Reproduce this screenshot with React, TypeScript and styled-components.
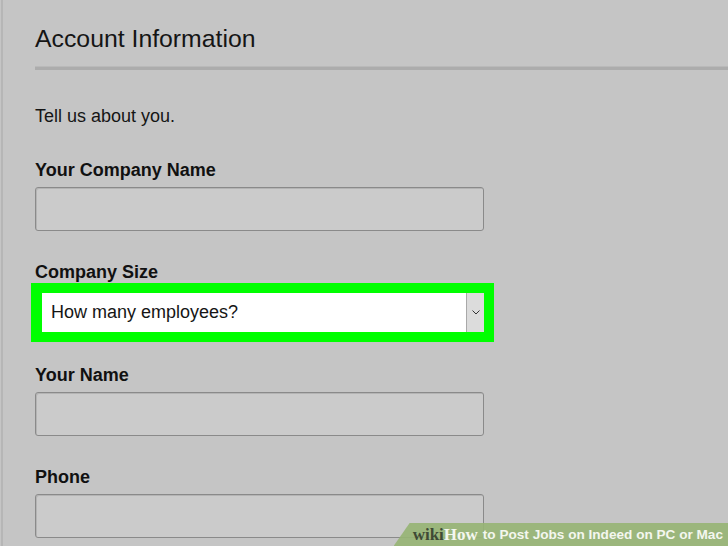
import React from 'react'
import styled, { createGlobalStyle } from 'styled-components'

const GlobalStyle = createGlobalStyle`
  html, body {
    margin: 0;
    padding: 0;
    background: #c5c5c5;
  }
  body {
    font-family: "Liberation Sans", Arial, sans-serif;
    color: #111111;
  }
`

const Page = styled.div`
  position: relative;
  width: 728px;
  height: 546px;
  overflow: hidden;
  background: #c5c5c5;
`

const Panel = styled.div`
  margin-left: 1px;
  height: 100%;
  border-left: 2px solid #b6b6b6;
  padding-left: 32px;
  padding-top: 24px;
  box-sizing: border-box;
`

const Title = styled.h1`
  margin: 0;
  font-size: 24.8px;
  line-height: 30px;
  font-weight: 400;
  color: #151515;
`

const Divider = styled.div`
  margin-top: 12px;
  height: 4px;
  background: #acacac;
  border-top: 1px solid #b9b9b9;
  box-sizing: border-box;
`

const Intro = styled.p`
  margin: 36px 0 0;
  font-size: 18px;
  line-height: 20px;
  color: #151515;
`

const Field = styled.div<{ $top: number }>`
  display: flex;
  flex-direction: column;
  align-items: flex-start;
  margin-top: ${p => p.$top}px;
`

const Label = styled.label<{ $gap: number }>`
  font-size: 18px;
  line-height: 20px;
  font-weight: 700;
  color: #111111;
  margin-bottom: ${p => p.$gap}px;
`

const TextInput = styled.div`
  width: 449px;
  height: 44px;
  box-sizing: border-box;
  border: 1px solid #8a8a8a;
  border-radius: 3px;
  background: #cbcbcb;
  box-shadow: inset 1px 1px 0 #b4b4b4;
`

const Highlight = styled.div`
  margin-left: -4px;
  border: 10px solid #00ff00;
  border-left-width: 11px;
  display: flex;
  width: 442px;
  height: 39px;
`

const SelectValue = styled.div`
  flex: 1;
  background: #ffffff;
  display: flex;
  align-items: center;
  padding-left: 9px;
  font-size: 18px;
  color: #151515;
`

const SelectButton = styled.div`
  width: 17px;
  background: #dcdcdc;
  border-left: 1px solid #a9a9a9;
  display: flex;
  align-items: center;
  justify-content: center;
`

const Watermark = styled.div`
  position: absolute;
  right: 0;
  bottom: 0;
  height: 23px;
  background: rgba(150, 180, 115, 0.9);
  clip-path: polygon(16px 0, 100% 0, 100% 100%, 0 100%);
  display: flex;
  align-items: center;
  padding: 0 5px 0 19px;
  white-space: nowrap;
`

const WikiWord = styled.span<{ $light?: boolean }>`
  font-family: "Liberation Serif", "Times New Roman", serif;
  font-weight: 700;
  font-size: 17px;
  color: ${p => (p.$light ? '#f4f7ef' : '#3f4a35')};
`

const WatermarkRest = styled.span`
  font-family: "Liberation Sans", Arial, sans-serif;
  font-weight: 700;
  font-size: 13.6px;
  color: #f4f7ef;
  margin-left: 5px;
`

const Chevron = () => (
  <svg width="8" height="5" viewBox="0 0 8 5">
    <path d="M0.5 0.5 L4 4 L7.5 0.5" fill="none" stroke="#333" strokeWidth="1" />
  </svg>
)

export default function App() {
  return (
    <Page>
      <GlobalStyle />
      <Panel>
        <Title>Account Information</Title>
        <Divider />
        <Intro>Tell us about you.</Intro>
        <Field $top={34}>
          <Label $gap={7}>Your Company Name</Label>
          <TextInput />
        </Field>
        <Field $top={31}>
          <Label $gap={1}>Company Size</Label>
          <Highlight>
            <SelectValue>How many employees?</SelectValue>
            <SelectButton>
              <Chevron />
            </SelectButton>
          </Highlight>
        </Field>
        <Field $top={23}>
          <Label $gap={7}>Your Name</Label>
          <TextInput />
        </Field>
        <Field $top={31}>
          <Label $gap={7}>Phone</Label>
          <TextInput />
        </Field>
      </Panel>
      <Watermark>
        <WikiWord>wiki</WikiWord>
        <WikiWord $light>How</WikiWord>
        <WatermarkRest>to Post Jobs on Indeed on PC or Mac</WatermarkRest>
      </Watermark>
    </Page>
  )
}
